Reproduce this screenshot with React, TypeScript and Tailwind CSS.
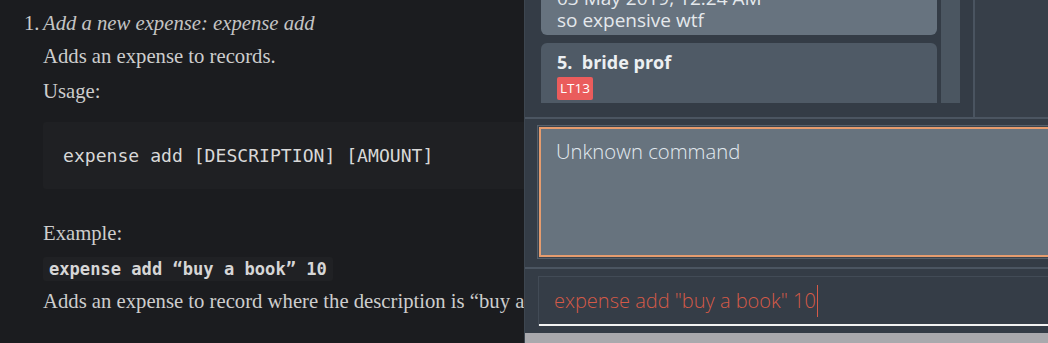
import React from "react";

const serif = { fontFamily: '"Liberation Serif", "Times New Roman", serif' } as React.CSSProperties;
const mono = { fontFamily: '"DejaVu Sans Mono", "Liberation Mono", monospace' } as React.CSSProperties;
const sans = { fontFamily: '"Open Sans", "Noto Sans", sans-serif' } as React.CSSProperties;

function DocPane() {
  return (
    <div className="w-[524px] h-[343px] shrink-0 overflow-hidden bg-[#1b1c1f] text-[#cdcdcd]" style={serif}>
      <div className="flex pt-[7px] text-[20.7px] leading-[32px]">
        <div className="w-[43px] shrink-0 pl-[24px]">1.</div>
        <div className="flex-1 min-w-0">
          <div className="italic text-[#c4c4c4] h-[32px]">Add a new expense: expense add</div>
          <div className="h-[34px] pt-[1px]">Adds an expense to records.</div>
          <div className="h-[35px] pt-[2px]">Usage:</div>
          <div className="mt-[14px] h-[67px] w-[600px] bg-[#1f2023] rounded-[3px] flex items-center pl-[20px] text-[18.1px] text-[#d8d8d8]" style={mono}>
            expense add [DESCRIPTION] [AMOUNT]
          </div>
          <div className="mt-[28px] h-[32px]">Example:</div>
          <div className="mt-[8px] h-[24px] w-[290px] bg-[#202124] rounded-[3px] pl-[6px] flex items-center text-[17.1px] font-bold text-[#d6d6d6]" style={mono}>
            expense add “buy a book” 10
          </div>
          <div className="mt-[4px] whitespace-nowrap h-[32px]">Adds an expense to record where the description is “buy a book” and the amount is 10.</div>
        </div>
      </div>
    </div>
  );
}

function AppPane() {
  return (
    <div className="w-[524px] h-[343px] shrink-0 overflow-hidden bg-[#343c46] border-l border-[#3d4650] flex flex-col" style={sans}>
      {/* list section */}
      <div className="h-[117px] flex shrink-0">
        <div className="w-[448px] shrink-0 pl-[16px] pb-[14px] flex flex-col">
          <div className="flex-1 flex overflow-hidden">
            <div className="w-[396px] shrink-0 overflow-hidden relative">
              <div className="absolute left-0 right-0 bottom-[68px] h-[80px] rounded-[6px] bg-[#67737f] text-[#e4e8ec]">
                <div className="absolute left-[16px] bottom-[26px] text-[19px] leading-[22px] whitespace-nowrap">03 May 2019, 12:24 AM</div>
                <div className="absolute left-[16px] bottom-[4px] text-[19px] leading-[22px] whitespace-nowrap">so expensive wtf</div>
              </div>
              <div className="absolute left-0 right-0 top-[43px] h-[90px] rounded-[6px] bg-[#4f5a66] px-[16px] pt-[6px] text-[#eceff2]">
                <div className="text-[18px] font-bold leading-[26px]">5.&nbsp;&nbsp;bride prof</div>
                <div className="mt-[2px] inline-block rounded-[2px] bg-[#ea5c5c] px-[3px] text-[13.5px] leading-[23px] text-white">LT13</div>
              </div>
            </div>
            <div className="ml-[4px] w-[19px] shrink-0 bg-[#4b5661]" />
          </div>
        </div>
        <div className="w-[2px] shrink-0 bg-[#4a5460]" />
        <div className="flex-1 bg-[#373f49]" />
      </div>
      <div className="h-[2px] shrink-0 bg-[#4b5561]" />
      {/* result section */}
      <div className="h-[148px] shrink-0 pl-[12px] pt-[6px] pb-[8px]">
        <div className="h-full w-[600px] border border-[#56606b] bg-[#3b434d] p-[1px]">
          <div className="h-full border-[2px] border-[#e69c6e] bg-[#67737e] pl-[15px] pt-[7px] text-[20.3px] font-light text-[#e2eaf0] leading-[30px]">
            Unknown command
          </div>
        </div>
      </div>
      <div className="h-[2px] shrink-0 bg-[#4b5561]" />
      {/* command section */}
      <div className="h-[64px] shrink-0 pl-[13px] pt-[7px]">
        <div className="h-[50px] w-[600px] border border-[#424b56] border-b-0 bg-[#353d47] flex flex-col">
          <div className="flex-1 flex items-center pl-[15px] text-[20px] font-light text-[#d45a48]">
            <span>expense add "buy a book" 10</span>
            <span className="inline-block w-[1.5px] h-[32px] bg-[#d45a48] ml-[1px]" />
          </div>
          <div className="h-[2px] bg-[#f2f2f2]" />
        </div>
      </div>
      <div className="flex-1 bg-[#a9a9ad]" />
    </div>
  );
}

export default function App() {
  return (
    <div className="flex w-[1048px] h-[343px] overflow-hidden">
      <DocPane />
      <AppPane />
    </div>
  );
}
